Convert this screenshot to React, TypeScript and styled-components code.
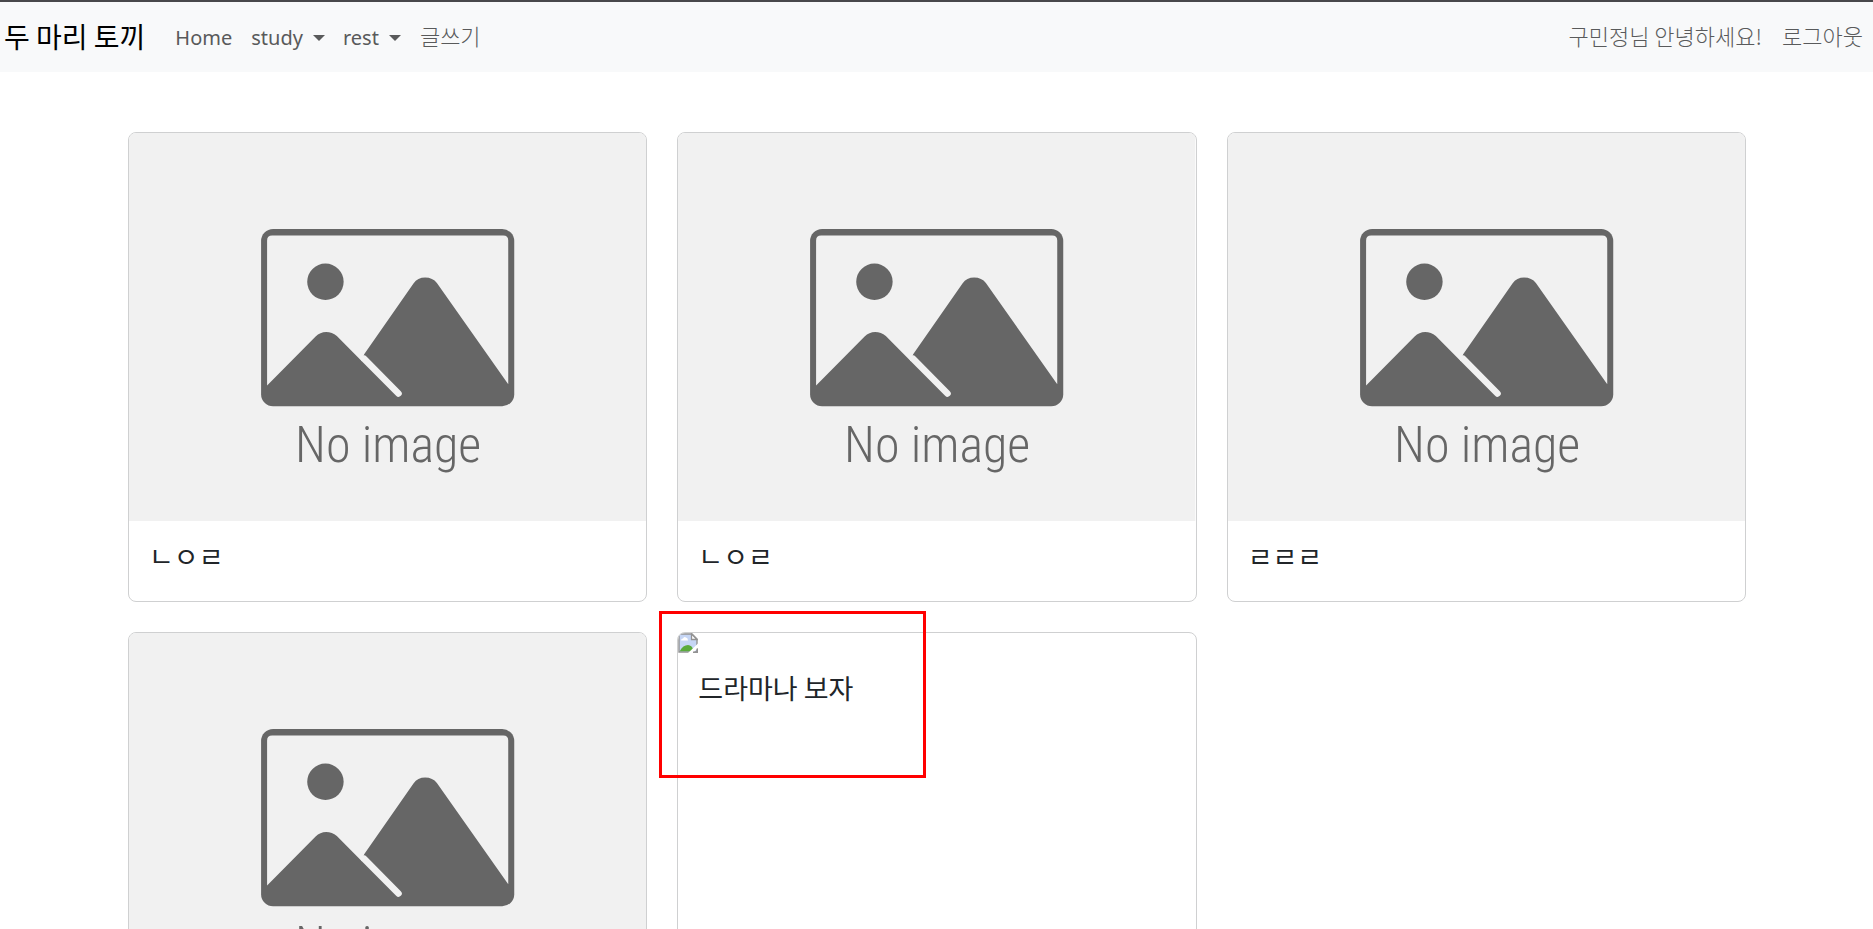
import React from "react";
import styled, { createGlobalStyle } from "styled-components";

const GlobalStyle = createGlobalStyle`
  *, *::before, *::after { box-sizing: border-box; }
  body {
    margin: 0;
    background: #fff;
    color: #212529;
    font-family: "Noto Sans", "Noto Sans CJK KR", sans-serif;
    font-size: 20px;
    line-height: 30px;
  }
`;

const Navbar = styled.nav`
  display: flex;
  align-items: center;
  height: 72px;
  padding-left: 4px;
  border-top: 2px solid #48484b;
  background: #f8f9fa;
`;

const Brand = styled.a`
  margin-right: 20px;
  padding-bottom: 2px;
  color: #000;
  font-family: "Noto Sans CJK KR", sans-serif;
  font-size: 28px;
  font-weight: 400;
  line-height: 40px;
  text-decoration: none;
  white-space: nowrap;
`;

const NavList = styled.ul<{ $end?: boolean }>`
  display: flex;
  align-items: center;
  margin: 0;
  margin-left: ${(p) => (p.$end ? "auto" : "0")};
  padding: 0;
  list-style: none;
`;

const NavLink = styled.a<{ $korean?: boolean }>`
  display: block;
  padding: ${(p) => (p.$korean ? "8px 10px 12px" : "11px 10px 9px")};
  color: #595a5b;
  font-family: ${(p) => (p.$korean ? '"Noto Sans CJK KR", sans-serif' : "inherit")};
  font-size: ${(p) => (p.$korean ? "22px" : "20px")};
  font-weight: ${(p) => (p.$korean ? 300 : 400)};
  text-decoration: none;
  white-space: nowrap;
`;

const NavToggle = styled.button`
  display: flex;
  align-items: center;
  gap: 10px;
  padding: 11px 9px 9px;
  border: 0;
  background: none;
  color: #595a5b;
  font: inherit;
  cursor: pointer;

  &::after {
    content: "";
    border-top: 6px solid;
    border-right: 6px solid transparent;
    border-left: 6px solid transparent;
  }
`;

const CardGrid = styled.main`
  display: grid;
  grid-template-columns: repeat(3, minmax(0, 1fr));
  gap: 30px;
  padding: 60px 127px 30px 128px;
`;

const Card = styled.article`
  position: relative;
  display: flex;
  flex-direction: column;
  border: 1px solid #cfd0d1;
  border-radius: 8px;
  background: #fff;
`;

const Picture = styled.svg`
  display: block;
  width: 100%;
  border-radius: 7px 7px 0 0;
`;

const PictureLabel = styled.text`
  fill: #666;
  font-family: "Roboto Condensed", "Roboto", sans-serif;
  font-size: 50px;
  font-weight: 300;
`;

const BrokenPicture = styled.svg`
  display: block;
  width: 20px;
  height: 20px;
  border-top-left-radius: 7px;
`;

const CardBody = styled.div`
  padding: 20px;
`;

const CardTitle = styled.h5`
  margin: 0 0 10px;
  font-family: "Noto Sans CJK KR", sans-serif;
  font-size: 27px;
  font-weight: 400;
  line-height: 30px;
`;

const Highlight = styled.div`
  position: absolute;
  top: -22px;
  left: -19px;
  width: 267px;
  height: 167px;
  border: 3px solid #f00;
  pointer-events: none;
`;

function NoImage() {
  return (
    <Picture viewBox="0 0 517 388" role="img" aria-label="No image">
      <rect width="517" height="388" fill="#f1f1f1" />
      <rect x="132" y="96" width="253" height="177" rx="12" fill="#666" />
      <path
        d="M143 102.5H374Q379 102.5 379 107.5V251L307.7 150Q303.5 144.5 296 144.5T284.3 150.3L235 221L232.7 228L207.7 203Q203 199 197 199T186.5 203.5L138 252.3V107.5Q138 102.5 143 102.5Z"
        fill="#f1f1f1"
      />
      <path d="M235 225.7L269.3 260.3" stroke="#f1f1f1" strokeWidth="6.6" strokeLinecap="round" />
      <circle cx="196.3" cy="148.7" r="18.2" fill="#666" />
      <PictureLabel x="259" y="329" textAnchor="middle">
        No image
      </PictureLabel>
    </Picture>
  );
}

function BrokenImage() {
  return (
    <BrokenPicture viewBox="0 0 20 20" role="img" aria-label="">
      <path d="M1 1H14L19 6V19H1Z" fill="#c6d6f5" stroke="#929292" strokeWidth="1.4" />
      <path d="M3 7.5Q3 5.5 5 5.5Q6 3 8 4.5Q10 5 10 7.5Z" fill="#fff" />
      <path d="M1.7 18.3Q5 12 10 12Q14 12 16 18.3Z" fill="#5aab3c" />
      <path d="M13.5 1V6.5H19L13.5 1Z" fill="#fff" stroke="#929292" strokeWidth="1.3" />
      <path d="M10 20L20 10.5V15L15 20Z" fill="#fff" />
      <path d="M15 19.3H19.3V15.5" fill="none" stroke="#929292" strokeWidth="1.4" />
    </BrokenPicture>
  );
}

const posts = [
  { id: 1, title: "ㄴㅇㄹ" },
  { id: 2, title: "ㄴㅇㄹ" },
  { id: 3, title: "ㄹㄹㄹ" },
  { id: 4, title: "ㄴㅇㄹ" },
  { id: 5, title: "드라마나 보자", broken: true },
];

export default function App() {
  return (
    <>
      <GlobalStyle />
      <Navbar>
        <Brand href="#">두 마리 토끼</Brand>
        <NavList>
          <li><NavLink href="#">Home</NavLink></li>
          <li><NavToggle type="button">study</NavToggle></li>
          <li><NavToggle type="button">rest</NavToggle></li>
          <li><NavLink href="#" $korean>글쓰기</NavLink></li>
        </NavList>
        <NavList $end>
          <li><NavLink href="#" $korean>구민정님 안녕하세요!</NavLink></li>
          <li><NavLink href="#" $korean>로그아웃</NavLink></li>
        </NavList>
      </Navbar>
      <CardGrid>
        {posts.map((post) => (
          <Card key={post.id}>
            {post.broken ? <BrokenImage /> : <NoImage />}
            <CardBody>
              <CardTitle>{post.title}</CardTitle>
            </CardBody>
            {post.broken && <Highlight />}
          </Card>
        ))}
      </CardGrid>
    </>
  );
}
